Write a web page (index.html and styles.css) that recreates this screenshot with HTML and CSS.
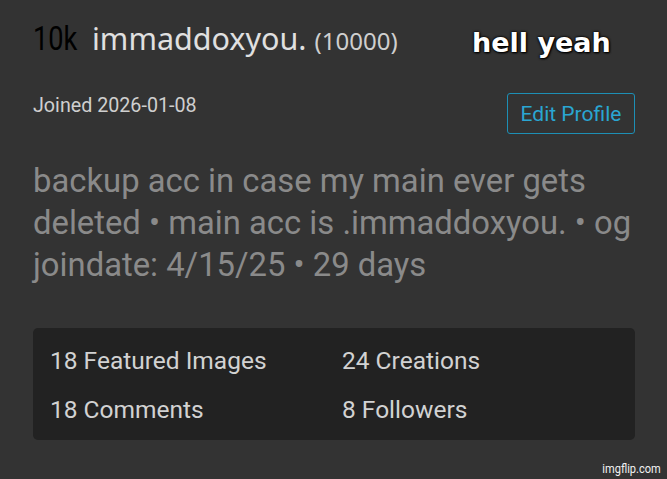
FILE: index.html
```html
<!DOCTYPE html>
<html>
<head>
<meta charset="utf-8">
<link rel="stylesheet" href="styles.css">
</head>
<body>
<div class="page">
  <div class="head">
    <span class="rank">10k</span>
    <span class="name">immaddoxyou.</span>
    <span class="points">(10000)</span>
  </div>
  <div class="meta">
    <span class="joined">Joined 2026-01-08</span>
    <button class="edit">Edit Profile</button>
  </div>
  <p class="bio">backup acc in case my main ever gets deleted • main acc is .immaddoxyou. • og joindate: 4/15/25 • 29 days</p>
  <div class="stats">
    <div class="stat">18 Featured Images</div>
    <div class="stat">24 Creations</div>
    <div class="stat">18 Comments</div>
    <div class="stat">8 Followers</div>
  </div>
  <div class="caption">hell yeah</div>
  <div class="mark">imgflip.com</div>
</div>
</body>
</html>
```
FILE: styles.css
```css
html, body {
  margin: 0;
  padding: 0;
  background: #333333;
}
.page {
  position: relative;
  width: 667px;
  height: 479px;
  box-sizing: border-box;
  padding: 18px 32px 0 33px;
  font-family: Roboto, "Liberation Sans", sans-serif;
  overflow: hidden;
}
.head {
  display: flex;
  align-items: baseline;
  height: 40px;
  line-height: 40px;
}
.rank {
  display: inline-block;
  font-family: Roboto, sans-serif;
  font-size: 34px;
  color: #000;
  width: 44px;
  margin-right: 15px;
  transform: scaleX(0.8);
  transform-origin: left;
  white-space: nowrap;
}
.name {
  font-family: "Noto Sans", sans-serif;
  font-size: 30.5px;
  color: #e0e0e0;
  margin-right: 8px;
}
.points {
  font-family: "Noto Sans", sans-serif;
  font-size: 24px;
  color: #cfcfcf;
}
.meta {
  display: flex;
  justify-content: space-between;
  align-items: flex-start;
  margin-top: 35px;
}
.joined {
  font-size: 19.7px;
  color: #cfcfcf;
  margin-top: 1px;
}
.edit {
  font-family: Roboto, sans-serif;
  font-size: 21px;
  color: #2aa6d2;
  background: transparent;
  border: 1.5px solid #1d8fb5;
  border-radius: 3px;
  width: 128px;
  height: 41px;
  padding: 0;
}
.bio {
  margin: 26px 0 0 0;
  font-size: 32.8px;
  line-height: 42px;
  color: #8a8a8a;
}
.stats {
  margin-top: 42px;
  background: #222222;
  border-radius: 5px;
  display: grid;
  grid-template-columns: 292px 1fr;
  row-gap: 18px;
  padding: 17px 17px 15px 17px;
}
.stat {
  font-size: 24.5px;
  line-height: 31px;
  color: #d2d2d2;
}
.caption {
  position: absolute;
  left: 472px;
  top: 27px;
  font-family: "DejaVu Sans", sans-serif;
  font-weight: bold;
  font-size: 27px;
  line-height: normal;
  color: #fff;
  text-shadow: 0 0 3px #000, 0 0 2px #000, 1px 1px 2px #000;
}
.mark {
  position: absolute;
  right: 6px;
  bottom: 3px;
  font-family: Roboto, sans-serif;
  font-size: 13px;
  color: #f0f0f0;
  transform: scaleX(0.85);
  transform-origin: right;
}
```
